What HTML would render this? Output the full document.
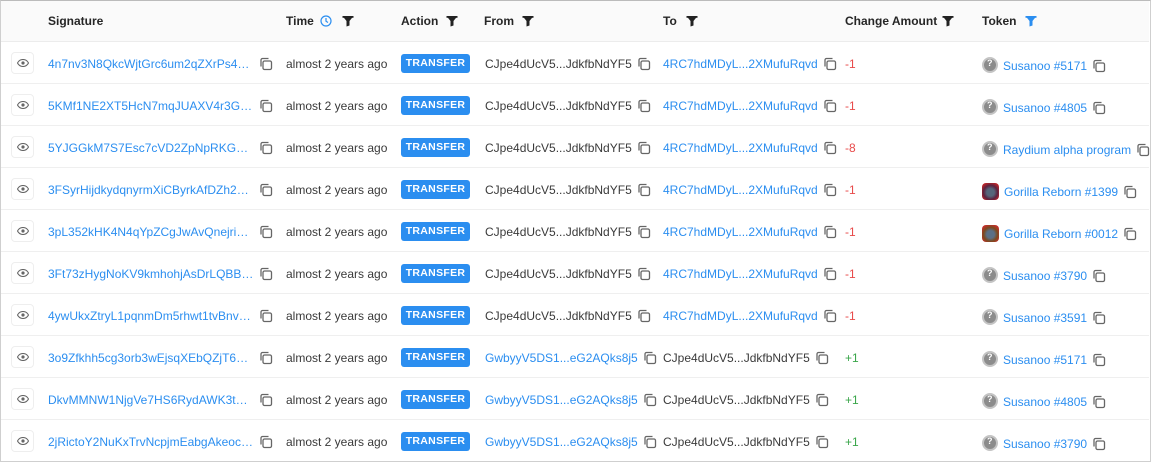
<!DOCTYPE html>
<html><head><meta charset="utf-8"><style>
*{margin:0;padding:0;box-sizing:border-box}
body{width:1151px;height:462px;background:#fff;font-family:"Liberation Sans",Arial,sans-serif;font-size:12px;color:#3a3a3a;overflow:hidden;position:relative}
.wrap{position:absolute;left:0;top:0;width:1151px;height:462px;border:1px solid #cfcfcf;border-top-color:#bbb}
.hdr{position:absolute;left:1px;top:1px;width:1148px;height:41px;background:#fafafa;border-bottom:1px solid #ececec}
.h{position:absolute;top:13px;font-weight:bold;color:#262626;font-size:12px}
.row{position:absolute;left:1px;width:1148px;height:42px;border-bottom:1px solid #efefef}
.c{position:absolute;top:15px;white-space:nowrap}
.sig{width:206px;overflow:hidden;text-overflow:ellipsis}
.a{color:#2b8ef0}
.eye{position:absolute;left:10px;top:10px;width:23px;height:22px;border:1px solid #eee;border-radius:4px;background:#fff}
.eye svg{position:absolute;left:5px;top:6px}
.btn{position:absolute;left:400px;top:12px;width:69px;height:19px;background:#2b8ef0;border-radius:3px;color:#fff;font-size:10.5px;font-weight:bold;text-align:center;line-height:19px;letter-spacing:.3px}
.cp{display:inline-block;vertical-align:-3px;margin-left:5px}
.red{color:#e84a4a}.grn{color:#3aa64a}
.tk{display:inline-block;width:16px;height:16px;border-radius:50%;background:#8c8c8c;vertical-align:-3px;margin-right:5px;position:relative;border:2px solid #c4c4c4}
.tk:after{content:"?";position:absolute;left:3px;top:-1px;font-size:9px;color:#fff;font-weight:bold}
.gr{display:inline-block;width:17px;height:17px;border-radius:4px;background:radial-gradient(circle at 50% 55%,#55657a 30%,#5a2340 55%,#b8242a 80%);vertical-align:-4px;margin-right:5px}
.gr2{background:radial-gradient(circle at 50% 55%,#5b6f86 30%,#7a4a20 55%,#c0302a 80%)}
</style></head><body>
<svg width="0" height="0" style="position:absolute"><defs>
<symbol id="cp" viewBox="0 0 14 14"><rect x="4" y="4" width="8.5" height="8.5" rx="1.5" fill="none" stroke="#666" stroke-width="1.3"/><path d="M2 9.5V3a1.5 1.5 0 0 1 1.5-1.5H9.5" fill="none" stroke="#666" stroke-width="1.3"/></symbol>
<symbol id="eye" viewBox="0 0 12 8"><path d="M0.5 4C2 1.2 4 0.5 6 0.5S10 1.2 11.5 4C10 6.8 8 7.5 6 7.5S2 6.8 0.5 4Z" fill="none" stroke="#666" stroke-width="1.1"/><circle cx="6" cy="4" r="1.6" fill="#666"/></symbol>
<symbol id="flt" viewBox="0 0 12 12"><path d="M0.5 1h11L7.5 6v4.5l-3 1V6Z" fill="currentColor"/><rect x="0.5" y="1" width="11" height="1.8" fill="currentColor"/></symbol>
</defs></svg>
<div class="wrap"></div>
<div class="hdr">
<div class="h" style="left:47px">Signature</div>
<div class="h" style="left:285px">Time <svg width="12" height="12" viewBox="0 0 12 12" style="vertical-align:-2px;margin-left:3px"><circle cx="6" cy="6" r="5" fill="none" stroke="#2b8ef0" stroke-width="1.2"/><path d="M6 3v3.2l2 1.3" fill="none" stroke="#2b8ef0" stroke-width="1.2"/></svg></div>
<svg style="position:absolute;left:341px;top:14px;color:#222" width="12" height="12"><use href="#flt"/></svg>
<div class="h" style="left:400px">Action</div>
<svg style="position:absolute;left:445px;top:14px;color:#222" width="12" height="12"><use href="#flt"/></svg>
<div class="h" style="left:483px">From</div>
<svg style="position:absolute;left:521px;top:14px;color:#222" width="12" height="12"><use href="#flt"/></svg>
<div class="h" style="left:662px">To</div>
<svg style="position:absolute;left:685px;top:14px;color:#222" width="12" height="12"><use href="#flt"/></svg>
<div class="h" style="left:844px">Change Amount</div>
<svg style="position:absolute;left:941px;top:14px;color:#222" width="12" height="12"><use href="#flt"/></svg>
<div class="h" style="left:981px">Token</div>
<svg style="position:absolute;left:1024px;top:14px;color:#2b8ef0" width="12" height="12"><use href="#flt"/></svg>
</div>

<div class="row" style="top:42px"><div class="eye"><svg width="12" height="8"><use href="#eye"/></svg></div><div class="c a sig" style="left:47px">4n7nv3N8QkcWjtGrc6um2qZXrPs4qxxxxxx</div><svg class="c" style="left:258px;top:15px" width="14" height="14"><use href="#cp"/></svg><div class="c" style="left:285px">almost 2 years ago</div><div class="btn">TRANSFER</div><div class="c" style="left:484px">CJpe4dUcV5...JdkfbNdYF5<svg class="cp" width="14" height="14"><use href="#cp"/></svg></div><div class="c a" style="left:662px">4RC7hdMDyL...2XMufuRqvd<svg class="cp" width="14" height="14"><use href="#cp"/></svg></div><div class="c red" style="left:844px">-1</div><div class="c a" style="left:981px"><span class="tk"></span>Susanoo #5171<svg class="cp" width="14" height="14"><use href="#cp"/></svg></div></div>

<div class="row" style="top:84px"><div class="eye"><svg width="12" height="8"><use href="#eye"/></svg></div><div class="c a sig" style="left:47px">5KMf1NE2XT5HcN7mqJUAXV4r3Ghxxxxxx</div><svg class="c" style="left:258px;top:15px" width="14" height="14"><use href="#cp"/></svg><div class="c" style="left:285px">almost 2 years ago</div><div class="btn">TRANSFER</div><div class="c" style="left:484px">CJpe4dUcV5...JdkfbNdYF5<svg class="cp" width="14" height="14"><use href="#cp"/></svg></div><div class="c a" style="left:662px">4RC7hdMDyL...2XMufuRqvd<svg class="cp" width="14" height="14"><use href="#cp"/></svg></div><div class="c red" style="left:844px">-1</div><div class="c a" style="left:981px"><span class="tk"></span>Susanoo #4805<svg class="cp" width="14" height="14"><use href="#cp"/></svg></div></div>

<div class="row" style="top:126px"><div class="eye"><svg width="12" height="8"><use href="#eye"/></svg></div><div class="c a sig" style="left:47px">5YJGGkM7S7Esc7cVD2ZpNpRKGFgxxxxxx</div><svg class="c" style="left:258px;top:15px" width="14" height="14"><use href="#cp"/></svg><div class="c" style="left:285px">almost 2 years ago</div><div class="btn">TRANSFER</div><div class="c" style="left:484px">CJpe4dUcV5...JdkfbNdYF5<svg class="cp" width="14" height="14"><use href="#cp"/></svg></div><div class="c a" style="left:662px">4RC7hdMDyL...2XMufuRqvd<svg class="cp" width="14" height="14"><use href="#cp"/></svg></div><div class="c red" style="left:844px">-8</div><div class="c a" style="left:981px"><span class="tk"></span>Raydium alpha program<svg class="cp" width="14" height="14"><use href="#cp"/></svg></div></div>

<div class="row" style="top:168px"><div class="eye"><svg width="12" height="8"><use href="#eye"/></svg></div><div class="c a sig" style="left:47px">3FSyrHijdkydqnyrmXiCByrkAfDZh2Fxxxxxx</div><svg class="c" style="left:258px;top:15px" width="14" height="14"><use href="#cp"/></svg><div class="c" style="left:285px">almost 2 years ago</div><div class="btn">TRANSFER</div><div class="c" style="left:484px">CJpe4dUcV5...JdkfbNdYF5<svg class="cp" width="14" height="14"><use href="#cp"/></svg></div><div class="c a" style="left:662px">4RC7hdMDyL...2XMufuRqvd<svg class="cp" width="14" height="14"><use href="#cp"/></svg></div><div class="c red" style="left:844px">-1</div><div class="c a" style="left:981px"><span class="gr"></span>Gorilla Reborn #1399<svg class="cp" width="14" height="14"><use href="#cp"/></svg></div></div>

<div class="row" style="top:210px"><div class="eye"><svg width="12" height="8"><use href="#eye"/></svg></div><div class="c a sig" style="left:47px">3pL352kHK4N4qYpZCgJwAvQnejriayxxxxxx</div><svg class="c" style="left:258px;top:15px" width="14" height="14"><use href="#cp"/></svg><div class="c" style="left:285px">almost 2 years ago</div><div class="btn">TRANSFER</div><div class="c" style="left:484px">CJpe4dUcV5...JdkfbNdYF5<svg class="cp" width="14" height="14"><use href="#cp"/></svg></div><div class="c a" style="left:662px">4RC7hdMDyL...2XMufuRqvd<svg class="cp" width="14" height="14"><use href="#cp"/></svg></div><div class="c red" style="left:844px">-1</div><div class="c a" style="left:981px"><span class="gr gr2"></span>Gorilla Reborn #0012<svg class="cp" width="14" height="14"><use href="#cp"/></svg></div></div>

<div class="row" style="top:252px"><div class="eye"><svg width="12" height="8"><use href="#eye"/></svg></div><div class="c a sig" style="left:47px">3Ft73zHygNoKV9kmhohjAsDrLQBBYxxxxxx</div><svg class="c" style="left:258px;top:15px" width="14" height="14"><use href="#cp"/></svg><div class="c" style="left:285px">almost 2 years ago</div><div class="btn">TRANSFER</div><div class="c" style="left:484px">CJpe4dUcV5...JdkfbNdYF5<svg class="cp" width="14" height="14"><use href="#cp"/></svg></div><div class="c a" style="left:662px">4RC7hdMDyL...2XMufuRqvd<svg class="cp" width="14" height="14"><use href="#cp"/></svg></div><div class="c red" style="left:844px">-1</div><div class="c a" style="left:981px"><span class="tk"></span>Susanoo #3790<svg class="cp" width="14" height="14"><use href="#cp"/></svg></div></div>

<div class="row" style="top:294px"><div class="eye"><svg width="12" height="8"><use href="#eye"/></svg></div><div class="c a sig" style="left:47px">4ywUkxZtryL1pqnmDm5rhwt1tvBnvLxxxxxx</div><svg class="c" style="left:258px;top:15px" width="14" height="14"><use href="#cp"/></svg><div class="c" style="left:285px">almost 2 years ago</div><div class="btn">TRANSFER</div><div class="c" style="left:484px">CJpe4dUcV5...JdkfbNdYF5<svg class="cp" width="14" height="14"><use href="#cp"/></svg></div><div class="c a" style="left:662px">4RC7hdMDyL...2XMufuRqvd<svg class="cp" width="14" height="14"><use href="#cp"/></svg></div><div class="c red" style="left:844px">-1</div><div class="c a" style="left:981px"><span class="tk"></span>Susanoo #3591<svg class="cp" width="14" height="14"><use href="#cp"/></svg></div></div>

<div class="row" style="top:336px"><div class="eye"><svg width="12" height="8"><use href="#eye"/></svg></div><div class="c a sig" style="left:47px">3o9Zfkhh5cg3orb3wEjsqXEbQZjT6Kxxxxxx</div><svg class="c" style="left:258px;top:15px" width="14" height="14"><use href="#cp"/></svg><div class="c" style="left:285px">almost 2 years ago</div><div class="btn">TRANSFER</div><div class="c a" style="left:484px">GwbyyV5DS1...eG2AQks8j5<svg class="cp" width="14" height="14"><use href="#cp"/></svg></div><div class="c" style="left:662px">CJpe4dUcV5...JdkfbNdYF5<svg class="cp" width="14" height="14"><use href="#cp"/></svg></div><div class="c grn" style="left:844px">+1</div><div class="c a" style="left:981px"><span class="tk"></span>Susanoo #5171<svg class="cp" width="14" height="14"><use href="#cp"/></svg></div></div>

<div class="row" style="top:378px"><div class="eye"><svg width="12" height="8"><use href="#eye"/></svg></div><div class="c a sig" style="left:47px">DkvMMNW1NjgVe7HS6RydAWK3t8xxxxxx</div><svg class="c" style="left:258px;top:15px" width="14" height="14"><use href="#cp"/></svg><div class="c" style="left:285px">almost 2 years ago</div><div class="btn">TRANSFER</div><div class="c a" style="left:484px">GwbyyV5DS1...eG2AQks8j5<svg class="cp" width="14" height="14"><use href="#cp"/></svg></div><div class="c" style="left:662px">CJpe4dUcV5...JdkfbNdYF5<svg class="cp" width="14" height="14"><use href="#cp"/></svg></div><div class="c grn" style="left:844px">+1</div><div class="c a" style="left:981px"><span class="tk"></span>Susanoo #4805<svg class="cp" width="14" height="14"><use href="#cp"/></svg></div></div>

<div class="row" style="top:420px;border-bottom:none"><div class="eye"><svg width="12" height="8"><use href="#eye"/></svg></div><div class="c a sig" style="left:47px">2jRictoY2NuKxTrvNcpjmEabgAkeocvxxxxxx</div><svg class="c" style="left:258px;top:15px" width="14" height="14"><use href="#cp"/></svg><div class="c" style="left:285px">almost 2 years ago</div><div class="btn">TRANSFER</div><div class="c a" style="left:484px">GwbyyV5DS1...eG2AQks8j5<svg class="cp" width="14" height="14"><use href="#cp"/></svg></div><div class="c" style="left:662px">CJpe4dUcV5...JdkfbNdYF5<svg class="cp" width="14" height="14"><use href="#cp"/></svg></div><div class="c grn" style="left:844px">+1</div><div class="c a" style="left:981px"><span class="tk"></span>Susanoo #3790<svg class="cp" width="14" height="14"><use href="#cp"/></svg></div></div>
</body></html>
